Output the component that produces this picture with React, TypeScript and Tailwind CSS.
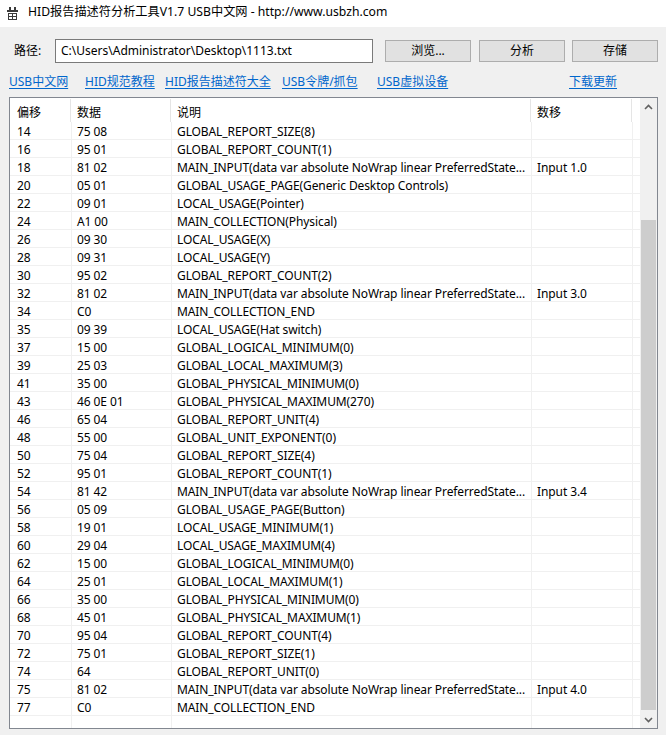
import React from 'react';

const MI = 'MAIN_INPUT(data var absolute NoWrap linear PreferredState...';

const rows: [string, string, string, string][] = [
  ['14', '75 08', 'GLOBAL_REPORT_SIZE(8)', ''],
  ['16', '95 01', 'GLOBAL_REPORT_COUNT(1)', ''],
  ['18', '81 02', MI, 'Input 1.0'],
  ['20', '05 01', 'GLOBAL_USAGE_PAGE(Generic Desktop Controls)', ''],
  ['22', '09 01', 'LOCAL_USAGE(Pointer)', ''],
  ['24', 'A1 00', 'MAIN_COLLECTION(Physical)', ''],
  ['26', '09 30', 'LOCAL_USAGE(X)', ''],
  ['28', '09 31', 'LOCAL_USAGE(Y)', ''],
  ['30', '95 02', 'GLOBAL_REPORT_COUNT(2)', ''],
  ['32', '81 02', MI, 'Input 3.0'],
  ['34', 'C0', 'MAIN_COLLECTION_END', ''],
  ['35', '09 39', 'LOCAL_USAGE(Hat switch)', ''],
  ['37', '15 00', 'GLOBAL_LOGICAL_MINIMUM(0)', ''],
  ['39', '25 03', 'GLOBAL_LOCAL_MAXIMUM(3)', ''],
  ['41', '35 00', 'GLOBAL_PHYSICAL_MINIMUM(0)', ''],
  ['43', '46 0E 01', 'GLOBAL_PHYSICAL_MAXIMUM(270)', ''],
  ['46', '65 04', 'GLOBAL_REPORT_UNIT(4)', ''],
  ['48', '55 00', 'GLOBAL_UNIT_EXPONENT(0)', ''],
  ['50', '75 04', 'GLOBAL_REPORT_SIZE(4)', ''],
  ['52', '95 01', 'GLOBAL_REPORT_COUNT(1)', ''],
  ['54', '81 42', MI, 'Input 3.4'],
  ['56', '05 09', 'GLOBAL_USAGE_PAGE(Button)', ''],
  ['58', '19 01', 'LOCAL_USAGE_MINIMUM(1)', ''],
  ['60', '29 04', 'LOCAL_USAGE_MAXIMUM(4)', ''],
  ['62', '15 00', 'GLOBAL_LOGICAL_MINIMUM(0)', ''],
  ['64', '25 01', 'GLOBAL_LOCAL_MAXIMUM(1)', ''],
  ['66', '35 00', 'GLOBAL_PHYSICAL_MINIMUM(0)', ''],
  ['68', '45 01', 'GLOBAL_PHYSICAL_MAXIMUM(1)', ''],
  ['70', '95 04', 'GLOBAL_REPORT_COUNT(4)', ''],
  ['72', '75 01', 'GLOBAL_REPORT_SIZE(1)', ''],
  ['74', '64', 'GLOBAL_REPORT_UNIT(0)', ''],
  ['75', '81 02', MI, 'Input 4.0'],
  ['77', 'C0', 'MAIN_COLLECTION_END', ''],
  ['', '', '', ''],
];

const links = [
  { label: 'USB中文网', w: 'w-[76px]' },
  { label: 'HID规范教程', w: 'w-[80px]' },
  { label: 'HID报告描述符大全', w: 'w-[117px]' },
  { label: 'USB令牌/抓包', w: 'w-[95px]' },
  { label: 'USB虚拟设备', w: 'w-[192px]' },
  { label: '下载更新', w: '' },
];

const AppIcon = () => (
  <svg width="11" height="13" viewBox="0 0 11 13" className="shrink-0">
    <rect x="2" y="0" width="2" height="3" fill="#3a3a3a" />
    <rect x="7" y="0" width="2" height="3" fill="#3a3a3a" />
    <rect x="0" y="3" width="11" height="2" fill="#3a3a3a" />
    <rect x="1" y="6" width="9" height="7" fill="#3a3a3a" />
    <rect x="2" y="7" width="3" height="2" fill="#ffffff" />
    <rect x="6" y="7" width="3" height="2" fill="#ffffff" />
    <rect x="2" y="10" width="3" height="2" fill="#ffffff" />
    <rect x="6" y="10" width="3" height="2" fill="#ffffff" />
  </svg>
);

const Chevron = ({ down }: { down?: boolean }) => (
  <svg width="9" height="6" viewBox="0 0 9 6" className={down ? 'rotate-180' : ''}>
    <path d="M1 5 L4.5 1.5 L8 5" stroke="#606060" strokeWidth="1.6" fill="none" />
  </svg>
);

const HeaderCell = ({ label, w, pl }: { label: string; w: string; pl: string }) => (
  <div className={`${w} h-full flex items-center shrink-0`}>
    <span className={`flex-1 ${pl} pt-[5px]`}>{label}</span>
    <div className="w-px h-[23px] mt-[1px] bg-[#e5e5e5]" />
    <div className="w-px" />
  </div>
);

export default function App() {
  const font = "font-['Noto_Sans','Noto_Sans_CJK_SC',sans-serif]";
  return (
    <div className={`w-[666px] h-[735px] bg-[#f0f0f0] text-[12px] text-black overflow-hidden flex flex-col ${font}`}>
      {/* title bar */}
      <div className="h-[27px] bg-white flex items-center pl-[7px] gap-[10px] shrink-0">
        <AppIcon />
        <span className="text-[12.2px] leading-none pb-[2px]">HID报告描述符分析工具V1.7 USB中文网 - http://www.usbzh.com</span>
      </div>

      {/* path row */}
      <div className="flex items-center pt-[12px] pl-[14px] shrink-0">
        <span className="w-[41px]">路径:</span>
        <div className="w-[318px] h-[24px] bg-white border border-[#7a7a7a] flex items-center pl-[5px]">
          C:\Users\Administrator\Desktop\1113.txt
        </div>
        <button className="ml-[12px] w-[86px] h-[22px] bg-[#e1e1e1] border border-[#adadad]">浏览...</button>
        <button className="ml-[8px] w-[86px] h-[22px] bg-[#e1e1e1] border border-[#adadad]">分析</button>
        <button className="ml-[7px] w-[86px] h-[22px] bg-[#e1e1e1] border border-[#adadad]">存储</button>
      </div>

      {/* links */}
      <div className="flex items-center pl-[9px] pt-[3px] h-[34px] shrink-0">
        {links.map(l => (
          <div key={l.label} className={`${l.w} shrink-0`}>
            <span className="text-[#0066cc] underline underline-offset-2">{l.label}</span>
          </div>
        ))}
      </div>

      {/* list */}
      <div className="ml-[9px] w-[649px] h-[632px] border border-[#828790] bg-white flex overflow-hidden shrink-0">
        <div className="w-[630px] flex flex-col overflow-hidden">
          <div className="h-[24px] flex shrink-0">
            <HeaderCell label="偏移" w="w-[62px]" pl="pl-[7px]" />
            <HeaderCell label="数据" w="w-[100px]" pl="pl-[5px]" />
            <HeaderCell label="说明" w="w-[360px]" pl="pl-[5px]" />
            <HeaderCell label="数移" w="w-[101px]" pl="pl-[5px]" />
          </div>
          {rows.map((r, i) => (
            <div key={i} className="h-[18px] flex shrink-0 border-b border-[#f0f0f0] leading-[14px] tracking-[-0.1px]">
              <div className="w-[62px] pl-[7px] pt-[3px] border-r border-[#f0f0f0] shrink-0">{r[0]}</div>
              <div className="w-[100px] pl-[5px] pt-[3px] border-r border-[#f0f0f0] shrink-0">{r[1]}</div>
              <div className="w-[360px] pl-[5px] pt-[3px] border-r border-[#f0f0f0] shrink-0 whitespace-nowrap overflow-hidden">{r[2]}</div>
              <div className="w-[101px] pl-[5px] pt-[3px] border-r border-[#f0f0f0] shrink-0">{r[3]}</div>
            </div>
          ))}
        </div>
        {/* scrollbar */}
        <div className="w-[17px] bg-[#f0f0f0] flex flex-col shrink-0">
          <div className="h-[17px] flex items-center justify-center">
            <Chevron />
          </div>
          <div className="h-[105px]" />
          <div className="h-[490px] mx-px bg-[#cdcdcd]" />
          <div className="h-px" />
          <div className="h-[17px] flex items-center justify-center">
            <Chevron down />
          </div>
        </div>
      </div>
    </div>
  );
}
